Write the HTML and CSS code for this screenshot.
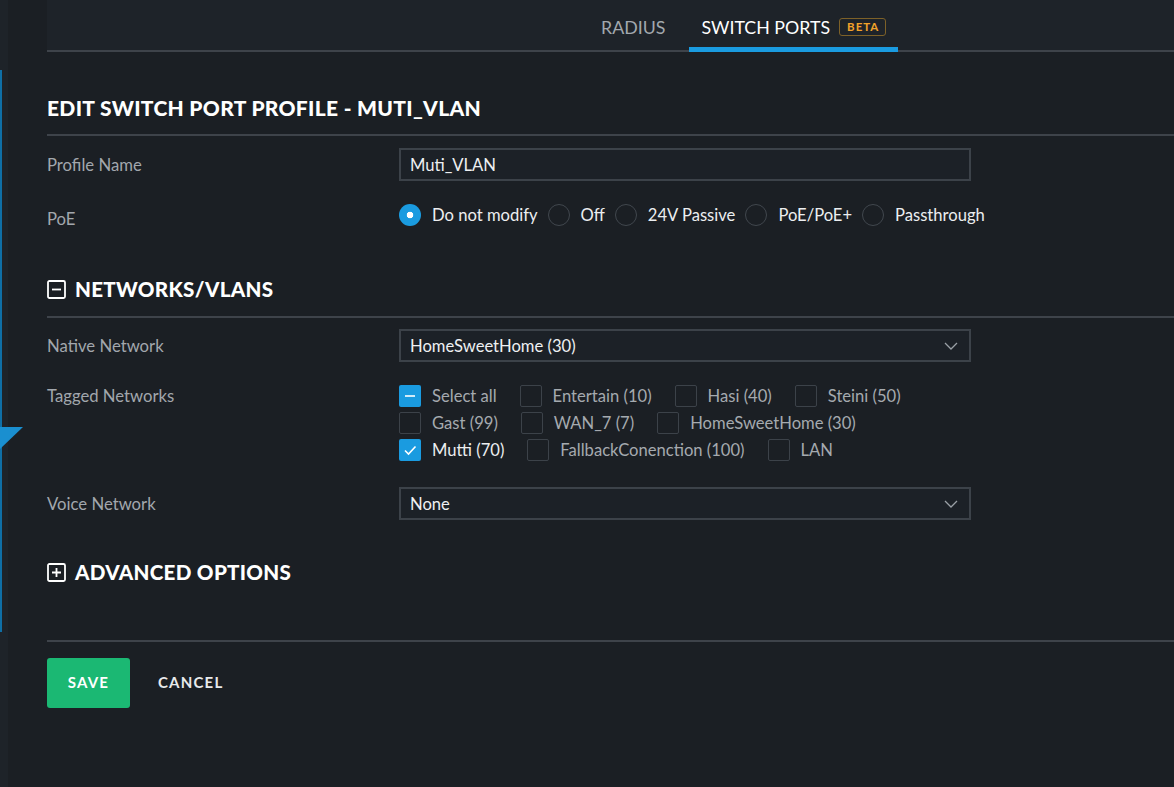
FILE: index.html
```html
<!DOCTYPE html>
<html>
<head>
<meta charset="utf-8">
<link rel="stylesheet" href="styles.css">
</head>
<body>
<div class="page">
  <div class="side">
    <div class="side-bar"><span class="side-tri"></span></div>
  </div>
  <div class="main">
    <div class="header">
      <div class="tabs">
        <div class="tab">RADIUS</div>
        <div class="tab active">SWITCH PORTS <span class="badge">BETA</span></div>
      </div>
    </div>

    <h1 class="title">EDIT SWITCH PORT PROFILE - MUTI_VLAN</h1>

    <div class="row row-profile">
      <div class="label">Profile Name</div>
      <div class="field input">Muti_VLAN</div>
    </div>

    <div class="row row-poe">
      <div class="label label-poe">PoE</div>
      <div class="radios">
        <div class="radio-item"><span class="radio checked"></span><span class="opt on">Do not modify</span></div>
        <div class="radio-item"><span class="radio"></span><span class="opt on">Off</span></div>
        <div class="radio-item"><span class="radio"></span><span class="opt on">24V Passive</span></div>
        <div class="radio-item"><span class="radio"></span><span class="opt on">PoE/PoE+</span></div>
        <div class="radio-item"><span class="radio"></span><span class="opt on">Passthrough</span></div>
      </div>
    </div>

    <h2 class="section sec-net">
      <span class="toggle">
        <svg width="19" height="19" viewBox="0 0 19 19"><rect x="1" y="1" width="17" height="17" rx="1.5" fill="none" stroke="#fff" stroke-width="1.8"/><path d="M5 9.5h9" stroke="#fff" stroke-width="1.8"/></svg>
      </span>NETWORKS/VLANS
    </h2>

    <div class="row row-native">
      <div class="label">Native Network</div>
      <div class="field select">HomeSweetHome (30)
        <svg class="chev" width="14" height="8" viewBox="0 0 14 8"><path d="M1 1l6 6 6-6" fill="none" stroke="#9aa0a6" stroke-width="1.3"/></svg>
      </div>
    </div>

    <div class="row row-tagged">
      <div class="label">Tagged Networks</div>
      <div class="checks">
        <div class="cb-item"><span class="cb checked"><svg width="22" height="22" viewBox="0 0 22 22"><path d="M6 11h10" stroke="#fff" stroke-width="1.6"/></svg></span><span class="opt dim">Select all</span></div>
        <div class="cb-item"><span class="cb"></span><span class="opt dim">Entertain (10)</span></div>
        <div class="cb-item"><span class="cb"></span><span class="opt dim">Hasi (40)</span></div>
        <div class="cb-item"><span class="cb"></span><span class="opt dim">Steini (50)</span></div>
        <div class="cb-item"><span class="cb"></span><span class="opt dim">Gast (99)</span></div>
        <div class="cb-item"><span class="cb"></span><span class="opt dim">WAN_7 (7)</span></div>
        <div class="cb-item"><span class="cb"></span><span class="opt dim">HomeSweetHome (30)</span></div>
        <div class="cb-item"><span class="cb checked"><svg width="22" height="22" viewBox="0 0 22 22"><path d="M6 11.5l3.5 3.5 7-7.5" fill="none" stroke="#fff" stroke-width="1.6"/></svg></span><span class="opt on">Mutti (70)</span></div>
        <div class="cb-item"><span class="cb"></span><span class="opt dim">FallbackConenction (100)</span></div>
        <div class="cb-item"><span class="cb"></span><span class="opt dim">LAN</span></div>
      </div>
    </div>

    <div class="row row-voice">
      <div class="label">Voice Network</div>
      <div class="field select">None
        <svg class="chev" width="14" height="8" viewBox="0 0 14 8"><path d="M1 1l6 6 6-6" fill="none" stroke="#9aa0a6" stroke-width="1.3"/></svg>
      </div>
    </div>

    <h2 class="section sec-adv">
      <span class="toggle">
        <svg width="19" height="19" viewBox="0 0 19 19"><rect x="1" y="1" width="17" height="17" rx="1.5" fill="none" stroke="#fff" stroke-width="1.8"/><path d="M5 9.5h9M9.5 5v9" stroke="#fff" stroke-width="1.8"/></svg>
      </span>ADVANCED OPTIONS
    </h2>

    <div class="footer">
      <button class="btn-save">SAVE</button>
      <button class="btn-cancel">CANCEL</button>
    </div>
  </div>
</div>
</body>
</html>
```

FILE: styles.css
```css
html, body {
  margin: 0;
  padding: 0;
  background: #1b1f24;
  font-family: "Lato", "Noto Sans", sans-serif;
  color: #e6e8ea;
}

.page {
  display: flex;
  min-height: 787px;
  width: 1174px;
  overflow: hidden;
}

.side {
  width: 8px;
  flex: none;
  background: #1e2329;
}

.side-bar {
  position: relative;
  margin-top: 70px;
  height: 562px;
  width: 2px;
  background: #0f6fa6;
}

.side-tri {
  position: absolute;
  left: 0;
  top: 357px;
  width: 0;
  height: 0;
  border-top: 22px solid #1a8fd0;
  border-right: 23px solid transparent;
}

.main {
  flex: 1;
  padding-left: 39px;
  min-width: 0;
}

.header {
  height: 50px;
  border-bottom: 2px solid #3e434a;
  display: flex;
  align-items: flex-start;
  background: #1e2329;
}

.tabs {
  display: flex;
  gap: 12px;
  margin-left: 542px;
}

.tab {
  box-sizing: border-box;
  height: 52px;
  margin-bottom: -2px;
  padding: 7px 12px 0;
  border-bottom: 5px solid transparent;
  font-size: 17.8px;
  line-height: 20px;
  color: #a2a8ae;
  display: flex;
  align-items: center;
}

.tab.active {
  color: #ffffff;
  border-bottom-color: #1a9be0;
}

.badge {
  display: inline-block;
  margin-left: 9px;
  border: 1.5px solid #7d6128;
  border-radius: 3px;
  color: #f2a22a;
  font-size: 11.5px;
  font-weight: 700;
  letter-spacing: 1px;
  line-height: 16px;
  padding: 0 6px 0 7px;
}

.title {
  margin: 44px 0 0;
  font-size: 21px;
  line-height: 24px;
  font-weight: 900;
  color: #ffffff;
  padding-bottom: 14px;
  border-bottom: 2px solid #3e434a;
  letter-spacing: 0.3px;
}

.row {
  display: grid;
  grid-template-columns: 352px 572px;
  align-items: center;
}

.label {
  font-size: 16.7px;
  color: #a2a7ad;
}

.row-profile { margin-top: 12px; }
.row-poe { margin-top: 23px; }
.label-poe {
  align-self: start;
  margin-top: 8px;
  line-height: 14px;
}

.field {
  box-sizing: border-box;
  height: 33px;
  border: 2px solid #3c4249;
  background: #1c2127;
  font-size: 16.6px;
  color: #eef0f2;
  padding: 0 9px;
  display: flex;
  align-items: center;
  justify-content: space-between;
}

.chev { margin-right: 2px; }

.radios {
  display: flex;
  gap: 10px;
  white-space: nowrap;
  height: 22px;
}

.radio-item, .cb-item {
  display: flex;
  align-items: center;
  gap: 11px;
}

.radio {
  box-sizing: border-box;
  width: 22px;
  height: 22px;
  border-radius: 50%;
  border: 1.5px solid #41474e;
  background: #1b1f24;
  flex: none;
}

.radio.checked {
  border: none;
  background: radial-gradient(circle, #ffffff 0 3px, #1a9be0 3.6px);
}

.opt {
  font-size: 16.6px;
  line-height: 20px;
}
.opt.on { color: #eceef0; }
.opt.dim { color: #a5aaaf; }

.section {
  display: flex;
  align-items: center;
  font-size: 20.6px;
  line-height: 24px;
  font-weight: 900;
  color: #ffffff;
  margin: 0;
  letter-spacing: 0.3px;
}

.toggle {
  display: flex;
  width: 19px;
  height: 19px;
  margin-right: 9px;
}

.sec-net {
  margin-top: 51px;
  padding-bottom: 15px;
  border-bottom: 2px solid #3e434a;
}

.row-native { margin-top: 11px; }

.row-tagged {
  margin-top: 23px;
  align-items: start;
}
.row-tagged .label { line-height: 22px; }

.checks {
  display: flex;
  flex-wrap: wrap;
  column-gap: 23px;
  row-gap: 5px;
  width: 545px;
}

.cb {
  box-sizing: border-box;
  width: 22px;
  height: 22px;
  border: 1.5px solid #3c4249;
  border-radius: 2px;
  flex: none;
  display: flex;
}

.cb.checked {
  border: none;
  background: #1a9be0;
}

.row-voice { margin-top: 26px; }

.sec-adv { margin-top: 40px; }

.footer {
  margin-top: 56px;
  border-top: 2px solid #3e434a;
  padding-top: 16px;
  display: flex;
  align-items: center;
}

.btn-save {
  width: 83px;
  height: 50px;
  border: none;
  border-radius: 3px;
  background: #1bb873;
  color: #ffffff;
  font-family: "Lato", sans-serif;
  font-size: 15px;
  font-weight: 700;
  letter-spacing: 1.2px;
  padding: 0 0 3px;
  cursor: pointer;
}

.btn-cancel {
  margin-left: 14px;
  background: none;
  border: none;
  color: #e8eaec;
  font-family: "Lato", sans-serif;
  font-size: 15px;
  font-weight: 700;
  letter-spacing: 1.2px;
  padding: 0 14px 3px;
  height: 50px;
}
```
